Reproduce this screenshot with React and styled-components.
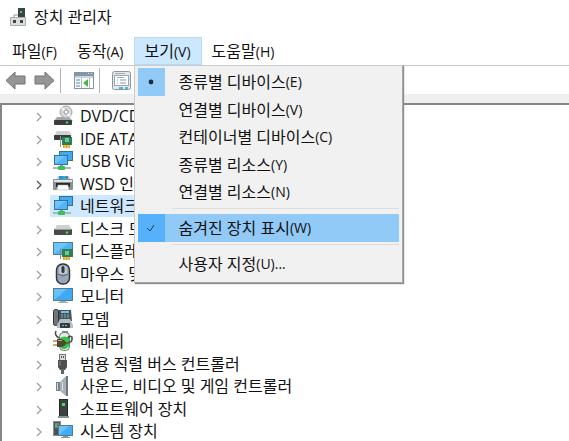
import React, { useState } from 'react';
import styled, { createGlobalStyle } from 'styled-components';

const GlobalStyle = createGlobalStyle`
  * {
    box-sizing: border-box;
  }
  html, body, #root {
    height: 100%;
  }
  body {
    margin: 0;
    overflow: hidden;
    background: #fff;
    color: #111;
    font-family: 'Open Sans', 'Noto Sans CJK KR', sans-serif;
    font-size: 16px;
    line-height: 22px;
  }
  button {
    font: inherit;
    color: inherit;
    padding: 0;
    border: 0;
    background: none;
    text-align: left;
    white-space: nowrap;
  }
`
const Window = styled.div`
  display: flex;
  flex-direction: column;
  height: 100%;
`
const TitleBar = styled.header`
  display: flex;
  align-items: center;
  gap: 7px;
  height: 34px;
  padding-left: 9px;
  flex: none;
`
const Title = styled.h1`
  margin: 0;
  font-size: 16px;
  font-weight: 400;
  line-height: 22px;
`
const MenuBar = styled.nav`
  display: flex;
  height: 32px;
  padding-top: 3px;
  padding-left: 2px;
  border-bottom: 1px solid #c4c8cc;
  flex: none;
`
const MenuSlot = styled.div`
  position: relative;
  display: flex;
`
const MenuButton = styled.button`
  padding: 0 ${props => props.$side}px;
  border: 1px solid ${props => (props.$open ? '#b3dcfb' : 'transparent')};
  background: ${props => (props.$open ? '#cce8ff' : 'transparent')};
`
const Accel = styled.span`
  font-size: 14px;
`
const Popup = styled.div`
  position: absolute;
  top: 28px;
  left: 0;
  z-index: 2;
  width: 269px;
  padding: 2px 3px 4px;
  border: 1px solid #c8cacc;
  border-right-color: #a6a6a6;
  border-bottom-color: #a6a6a6;
  background: #f1f1f1;
  box-shadow: 1px 1px 1px #8c8c8c;
`
const MenuItem = styled.button`
  display: flex;
  width: 100%;
  height: ${props => props.$height}px;
  align-items: center;
  background: ${props => (props.$active ? '#91c9f7' : 'transparent')};
`
const MenuMark = styled.span`
  display: flex;
  width: 27px;
  height: 100%;
  margin-right: 14px;
  align-items: center;
  justify-content: center;
  background: ${props => props.$color || 'transparent'};
`
const MenuLine = styled.hr`
  height: 1px;
  margin: 2px 0 5px 34px;
  border: 0;
  background: #dcdcdc;
`
const ToolBar = styled.div`
  display: flex;
  align-items: center;
  height: 28px;
  padding-left: 5px;
  flex: none;
`
const ToolButton = styled.button`
  display: flex;
  margin-right: ${props => props.$after}px;
`
const ToolLine = styled.span`
  width: 1px;
  height: 25px;
  margin-right: ${props => props.$after}px;
  background: #b4b4b4;
`
const Content = styled.main`
  display: flex;
  flex: 1;
  min-height: 0;
  padding-top: 9px;
  background: #efefef;
`
const Tree = styled.ul`
  flex: 1;
  margin: 0;
  padding: 0 0 0 31px;
  overflow: hidden;
  border-top: 2px solid #868686;
  border-left: 2px solid #868686;
  background: #fff;
  list-style: none;
`
const TreeRow = styled.li`
  display: flex;
  align-items: center;
  height: 22px;
  &:nth-child(even) {
    height: 23px;
  }
`
const Expander = styled.button`
  display: flex;
  width: 12px;
  margin-right: 5px;
  color: ${props => (props.$dark ? '#555' : '#a0a0a0')};
`
const TreeLabel = styled.button`
  display: flex;
  align-items: center;
  gap: 6px;
  height: 22px;
  padding: 0 6px 0 2px;
  background: ${props => (props.$selected ? '#cde8ff' : 'transparent')};
`
const Icon = styled.svg`
  display: block;
  width: ${props => props.$size || 22}px;
  height: ${props => props.$size || 22}px;
  flex: none;
`

const DvdIcon = () => (
  <Icon viewBox="0 0 22 22">
    <path d="M5 12h12l4 4H2z" fill="#a4a6a7" />
    <circle cx="14" cy="7" r="6" fill="#d3d7d8" stroke="#a4a9ab" />
    <path d="M10 3l3 3M15 8l3 3" stroke="#f5f7f7" strokeWidth="2" />
    <circle cx="14" cy="7" r="2" fill="#fff" stroke="#92989a" />
    <rect x="2" y="15" width="18" height="5" rx="1" fill="#3a3c3d" />
    <circle cx="15" cy="17.500" r="1.200" fill="#39dc51" />
  </Icon>
)
const IdeIcon = () => (
  <Icon viewBox="0 0 22 22">
    <path d="M5 3h12l3 5H2z" fill="#cfd1d2" />
    <rect x="2" y="7" width="17" height="5" rx="1" fill="#3b3d3d" />
    <path d="M10 9h10v8H10z" fill="#2f7f55" />
    <path d="M8.500 8v11" stroke="#8c9798" />
    <rect x="13" y="10" width="4" height="4" fill="#69c994" />
    <path d="M11 17h7v3h-7z" fill="#eb9d28" />
    <path d="M13 17v3m3-3v3" stroke="#fae07f" />
  </Icon>
)
const NetworkIcon = () => (
  <Icon viewBox="0 0 22 22">
    <rect x="7.500" y="1.500" width="13" height="9" fill="#45a9ed" stroke="#347098" />
    <rect x="2.500" y="5.500" width="13" height="9" fill="#52b5f8" stroke="#34749f" />
    <path d="M3 14V6h11z" fill="#8ad3ff" opacity=".5" />
    <path d="M8 15h3v2H8z" fill="#8b9a92" />
    <path d="M1 17h18v2H1z" fill="#a8b9b0" />
    <rect x="6" y="16" width="7" height="4" rx="1" fill="#3fbd5c" />
  </Icon>
)
const PrinterIcon = () => (
  <Icon viewBox="0 0 22 22">
    <path d="M4 7l2-4h11l2 4z" fill="#c8ced1" />
    <rect x="7" y="3" width="4" height="4" fill="#1698e9" />
    <rect x="11" y="3" width="3" height="4" fill="#25b8b0" />
    <rect x="14" y="3" width="2" height="4" fill="#6b72d2" />
    <rect x="1" y="6" width="20" height="11" rx="1" fill="#8c9092" />
    <rect x="2" y="7" width="18" height="2" fill="#e1e4e5" />
    <rect x="4" y="10" width="14" height="4" fill="#222728" />
    <path d="M6 12h10l1 5H5z" fill="#f8f9f9" stroke="#b0b5b7" strokeWidth=".5" />
  </Icon>
)
const DiskIcon = () => (
  <Icon viewBox="0 0 22 22">
    <path d="M5 7h12l3 5H2z" fill="#cdcfd0" />
    <rect x="2" y="11" width="18" height="6" rx="1" fill="#474a4b" />
    <path d="M3 11.500h16" stroke="#949797" />
    <circle cx="15" cy="14.500" r="1.200" fill="#42e356" />
  </Icon>
)
const DisplayIcon = () => (
  <Icon viewBox="0 0 22 22">
    <rect x="1.500" y="2.500" width="19" height="12" fill="#4fb4f5" stroke="#527a92" />
    <path d="M2 14V3h15z" fill="#8bd4ff" opacity=".5" />
    <rect x="10" y="9" width="11" height="8" fill="#2f7f55" />
    <rect x="13" y="11" width="4" height="4" fill="#6bcb91" />
    <path d="M8.500 8v11" stroke="#828f91" />
    <path d="M11 17h7v3h-7z" fill="#e3a12a" />
    <path d="M13 17v3m3-3v3" stroke="#f8dc72" />
  </Icon>
)
const MouseIcon = () => (
  <Icon viewBox="0 0 22 22">
    <rect x="4.500" y="1" width="13" height="20" rx="6" fill="#98a6b5" stroke="#30353a" strokeWidth="1.500" />
    <path d="M7 4q4-3 8 0v7H7z" fill="#bdc8d2" />
    <path d="M6 11l5 2 5-2" stroke="#536170" fill="none" />
    <rect x="9.500" y="3" width="3" height="7" rx="1.500" fill="#30373d" />
  </Icon>
)
const MonitorIcon = () => (
  <Icon viewBox="0 0 22 22">
    <rect x="1.500" y="3.500" width="19" height="12" fill="#3fa9f1" stroke="#527a92" />
    <path d="M2 15V4h13z" fill="#84d0ff" opacity=".6" />
    <path d="M8 16h6v1h2v1H6v-1h2z" fill="#a0abb0" />
  </Icon>
)
const ModemIcon = () => (
  <Icon viewBox="0 0 22 22">
    <path d="M6 2h13l1 11H6z" fill="#4c5256" />
    <rect x="1.500" y="1.500" width="5" height="16" rx="2" fill="#6f7679" stroke="#2f3437" />
    <rect x="9" y="3" width="8" height="2" fill="#62c4ef" />
    <path d="M9 7h8M9 9h8" stroke="#6cb5d9" strokeDasharray="2 1" />
    <path d="M8 11h10l3 6v3H5v-3z" fill="#b7bec2" />
    <rect x="8" y="15" width="10" height="5" rx="1" fill="#32393c" />
    <path d="M10 17.500h6" stroke="#40b5d6" strokeWidth="1.500" strokeDasharray="2 1" />
  </Icon>
)
const BatteryIcon = () => (
  <Icon viewBox="0 0 22 22">
    <path d="M10 1h6v2h-6z" fill="#828a85" />
    <rect x="7.500" y="2.500" width="10" height="18" rx="4" fill="#e2eee4" stroke="#628368" />
    <path d="M8 8q5-3 9 0v8q-4 6-9 1z" fill="#37c443" />
    <path d="M12 13q9 1 8-6-3-2-4 1M7 8Q2 5 4 1" stroke="#464b48" strokeWidth="1.500" fill="none" />
    <path d="M5 9h4q5 1 5 4t-5 4H5z" fill="#4f4837" />
    <path d="M1 11h4m-4 4h4" stroke="#ad8e49" strokeWidth="1.500" />
    <path d="M6 10.500h4" stroke="#b8a574" />
  </Icon>
)
const UsbIcon = () => (
  <Icon viewBox="0 0 22 22">
    <rect x="7.500" y="1.500" width="6" height="6" fill="#d9dada" stroke="#777" />
    <path d="M9 4h1m1 0h1" stroke="#555" strokeWidth="2" />
    <path d="M6 7h9v7l-2 3H8l-2-3z" fill="#4d4f50" />
    <rect x="9" y="16" width="3" height="5" fill="#606263" />
    <path d="M8 8v5" stroke="#85898a" />
  </Icon>
)
const SpeakerIcon = () => (
  <Icon viewBox="0 0 22 22">
    <path d="M4 7h4v9H4z" fill="#71818e" />
    <path d="M8 7l6-6v20l-6-5z" fill="#a9b1b7" />
    <path d="M14 1h2v20h-2z" fill="#6d7880" />
    <path d="M5.500 8v7m5-8v9" stroke="#d5dce0" />
  </Icon>
)
const SoftwareIcon = () => (
  <Icon viewBox="0 0 22 22">
    <rect x="7.500" y="1.500" width="8" height="17" fill="#3c4142" stroke="#252929" />
    <rect x="10" y="5" width="3" height="3" fill="#42e550" />
    <path d="M6 18h11v2H6z" fill="#8b9090" />
  </Icon>
)
const SystemIcon = () => (
  <Icon viewBox="0 0 22 22">
    <rect x="1.500" y="1.500" width="7" height="14" fill="#4b5355" stroke="#899193" />
    <path d="M3 4h4M3 7h4" stroke="#b0bbbd" />
    <circle cx="4" cy="5.500" r="1" fill="#43e75b" />
    <rect x="6.500" y="5.500" width="14" height="10" fill="#42adf2" stroke="#58788c" />
    <path d="M7 15V6h10z" fill="#90d7ff" opacity=".5" />
    <path d="M11 16h5v1h2v1H9v-1h2z" fill="#87969e" />
  </Icon>
)

const AppIcon = () => (
  <Icon $size={18} viewBox="0 0 18 18">
    <path d="M9 0h7v13H9z" fill="#3d4243" />
    <rect x="11" y="3" width="2" height="2" fill="#42d85b" />
    <path d="M5 9V7h4" stroke="#919899" fill="none" />
    <path d="M1.500 9.500h15v8h-15z" fill="#dcdede" stroke="#aaaeae" />
    <path d="M4 12h3v3H4zm7 0h3v3h-3z" fill="#404545" />
  </Icon>
)
const ArrowIcon = ({ flip }) => (
  <Icon $size={21} viewBox="0 0 21 21">
    <path
      d="M1 10.500L10 2v4h10v8H10v5z"
      fill="#969696"
      stroke="#727272"
      strokeLinejoin="round"
      transform={flip ? 'translate(21 0) scale(-1 1)' : undefined}
    />
  </Icon>
)
const ConsoleIcon = () => (
  <Icon $size={21} viewBox="0 0 21 21">
    <rect x="1.500" y="2.500" width="19" height="16" fill="#fff" stroke="#8795a2" />
    <path d="M1 2h20v4H1z" fill="#8496a8" />
    <path d="M15 3.500h1m2 0h1" stroke="#e4eef5" />
    <path d="M2 7h18" stroke="#c9d3dc" strokeWidth="2" />
    <path d="M8.500 8v10m8-10v10" stroke="#acb9c4" />
    <path d="M3 10h4m-4 3h4m-4 3h4" stroke="#4d83b6" />
    <path d="M10 13l5-4v8z" fill="#45b93c" />
  </Icon>
)
const PropertiesIcon = () => (
  <Icon $size={21} viewBox="0 0 21 21">
    <rect x="1.500" y="1.500" width="18" height="18" rx="2" fill="#e4e8ea" stroke="#8c969d" />
    <rect x="3.500" y="5.500" width="14" height="10" fill="#fff" stroke="#9ba7af" />
    <path d="M4 3.500h10M6 7.500h7" stroke="#a3adb4" />
    <path d="M6 10h1m2 0h6M6 13h1m2 0h6" stroke="#8a9ba7" />
    <path d="M8 18h4m2 0h3" stroke="#45b9df" strokeWidth="2" />
  </Icon>
)
const ChevronIcon = () => (
  <Icon $size={12} viewBox="0 0 12 12">
    <path d="M4 3l4 4-4 4" stroke="currentColor" strokeWidth="1.300" fill="none" />
  </Icon>
)
const CheckIcon = () => (
  <Icon $size={12} viewBox="0 0 12 12">
    <path d="M2 6l3 3 4-6" stroke="#173f62" fill="none" />
  </Icon>
)
const DotIcon = () => (
  <Icon $size={12} viewBox="0 0 12 12">
    <circle cx="6" cy="6" r="2.400" fill="#1c2d3c" />
  </Icon>
)

const menus = [
  {label: '파일', accel: '(F)', side: 9},
  {label: '동작', accel: '(A)', side: 9},
  {label: '보기', accel: '(V)', side: 10},
  {label: '도움말', accel: '(H)', side: 9},
];
const viewItems = [
  {label: '종류별 디바이스', accel: '(E)', value: 'deviceType'},
  {label: '연결별 디바이스', accel: '(V)', value: 'deviceConnection'},
  {label: '컨테이너별 디바이스', accel: '(C)', value: 'deviceContainer'},
  {label: '종류별 리소스', accel: '(Y)', value: 'resourceType'},
  {label: '연결별 리소스', accel: '(N)', value: 'resourceConnection'},
];
const devices = [
  {label: 'DVD/CD-ROM 드라이브', icon: DvdIcon},
  {label: 'IDE ATA/ATAPI 컨트롤러', icon: IdeIcon},
  {label: 'USB Video Device', icon: NetworkIcon},
  {label: 'WSD 인쇄 공급자', icon: PrinterIcon, dark: true},
  {label: '네트워크 어댑터', icon: NetworkIcon},
  {label: '디스크 드라이브', icon: DiskIcon},
  {label: '디스플레이 어댑터', icon: DisplayIcon},
  {label: '마우스 및 기타 포인팅 장치', icon: MouseIcon},
  {label: '모니터', icon: MonitorIcon},
  {label: '모뎀', icon: ModemIcon},
  {label: '배터리', icon: BatteryIcon},
  {label: '범용 직렬 버스 컨트롤러', icon: UsbIcon},
  {label: '사운드, 비디오 및 게임 컨트롤러', icon: SpeakerIcon},
  {label: '소프트웨어 장치', icon: SoftwareIcon},
  {label: '시스템 장치', icon: SystemIcon},
];

const ViewMenu = () => {
  const [view, setView] = useState('deviceType');
  const [showHidden, setShowHidden] = useState(true);

  return (
    <Popup role="menu" aria-label="보기">
      {viewItems.map((item, index) => (
        <MenuItem
          key={item.value}
          role="menuitemradio"
          aria-checked={view === item.value}
          $height={index % 2 ? 27 : 28}
          onClick={() => setView(item.value)}
        >
          <MenuMark $color={view === item.value && '#91c9f7'}>
            {view === item.value && <DotIcon />}
          </MenuMark>
          {item.label}<Accel>{item.accel}</Accel>
        </MenuItem>
      ))}
      <MenuLine />
      <MenuItem
        role="menuitemcheckbox"
        aria-checked={showHidden}
        $height={28}
        $active
        onClick={() => setShowHidden(!showHidden)}
      >
        <MenuMark $color="#56b0fa">{showHidden && <CheckIcon />}</MenuMark>
        숨겨진 장치 표시<Accel>(W)</Accel>
      </MenuItem>
      <MenuLine />
      <MenuItem role="menuitem" $height={28}>
        <MenuMark />
        사용자 지정<Accel>(U)...</Accel>
      </MenuItem>
    </Popup>
  )
}

export default function App() {
  const [openMenu, setOpenMenu] = useState('보기');
  const [selected, setSelected] = useState('네트워크 어댑터');

  return (
    <Window>
      <GlobalStyle />
      <TitleBar>
        <AppIcon />
        <Title>장치 관리자</Title>
      </TitleBar>
      <MenuBar>
        {menus.map(menu => (
          <MenuSlot key={menu.label}>
            <MenuButton
              $side={menu.side}
              $open={openMenu === menu.label}
              aria-haspopup="menu"
              aria-expanded={openMenu === menu.label}
              onClick={() => setOpenMenu(openMenu === menu.label ? null : menu.label)}
            >
              {menu.label}<Accel>{menu.accel}</Accel>
            </MenuButton>
            {menu.label === '보기' && openMenu === '보기' && <ViewMenu />}
          </MenuSlot>
        ))}
      </MenuBar>
      <ToolBar role="toolbar">
        <ToolButton $after={8} aria-label="뒤로"><ArrowIcon /></ToolButton>
        <ToolButton $after={5} aria-label="앞으로"><ArrowIcon flip /></ToolButton>
        <ToolLine $after={12} />
        <ToolButton $after={5} aria-label="콘솔 트리 표시"><ConsoleIcon /></ToolButton>
        <ToolLine $after={11} />
        <ToolButton $after={5} aria-label="속성"><PropertiesIcon /></ToolButton>
      </ToolBar>
      <Content>
        <Tree role="tree">
          {devices.map(({ label, icon: DeviceIcon, dark }) => (
            <TreeRow key={label} role="treeitem" aria-selected={selected === label}>
              <Expander $dark={dark} aria-label={label + ' 확장'}><ChevronIcon /></Expander>
              <TreeLabel $selected={selected === label} onClick={() => setSelected(label)}>
                <DeviceIcon />
                {label}
              </TreeLabel>
            </TreeRow>
          ))}
        </Tree>
      </Content>
    </Window>
  )
}
